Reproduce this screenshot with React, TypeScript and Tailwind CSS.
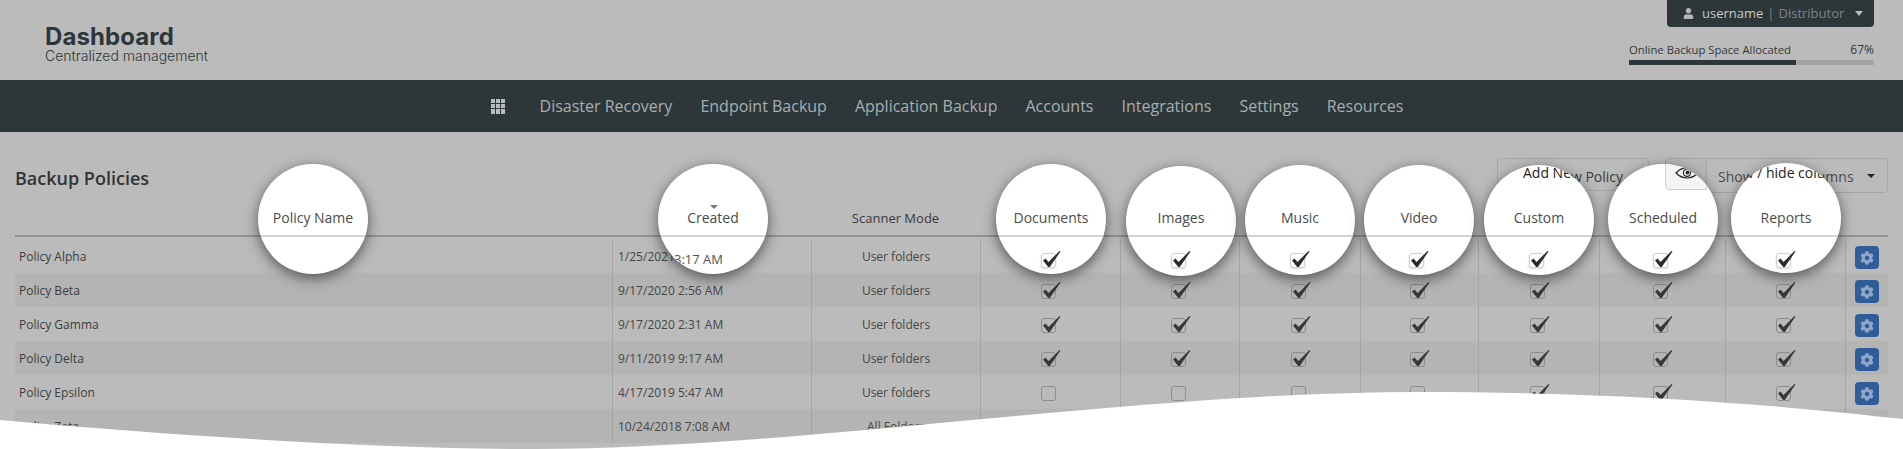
import type { ReactNode } from "react"
import { FaCog, FaUser } from "react-icons/fa"

const openSans = "font-['Open_Sans',sans-serif]"

const columns = "grid grid-cols-[597px_199px_169px_140px_119px_121px_118px_121px_126px_120px_43px]"

const navItems = [
  "Disaster Recovery",
  "Endpoint Backup",
  "Application Backup",
  "Accounts",
  "Integrations",
  "Settings",
  "Resources",
]

const policies = [
  { name: "Policy Alpha", created: "1/25/2021 3:17 AM", mode: "User folders", flags: [1, 1, 1, 1, 1, 1, 1] },
  { name: "Policy Beta", created: "9/17/2020 2:56 AM", mode: "User folders", flags: [1, 1, 1, 1, 1, 1, 1] },
  { name: "Policy Gamma", created: "9/17/2020 2:31 AM", mode: "User folders", flags: [1, 1, 1, 1, 1, 1, 1] },
  { name: "Policy Delta", created: "9/11/2019 9:17 AM", mode: "User folders", flags: [1, 1, 1, 1, 1, 1, 1] },
  { name: "Policy Epsilon", created: "4/17/2019 5:47 AM", mode: "User folders", flags: [0, 0, 0, 0, 1, 1, 1] },
  { name: "Policy Zeta", created: "10/24/2018 7:08 AM", mode: "All Folders", flags: [0, 0, 0, 0, 1, 1, 1] },
]

function Check({ on, light }: { on: boolean; light?: boolean }) {
  return (
    <div
      className={`relative h-[15px] w-[15px] rounded-[3px] border ${
        light ? "border-[#cfcfcf] bg-white shadow-[0_1px_2px_rgba(0,0,0,0.15)]" : "border-[#8d8d8d]"
      }`}
    >
      {on && (
        <svg width="22" height="20" viewBox="0 0 22 20" className="absolute -left-[2px] -top-[4px]">
          <path d="M3 10.5 L5.5 8.5 L8.5 12 L19.5 1 L20.5 1.5 L9.8 17 L8.2 17 Z" fill={light ? "#2a2a2a" : "#383838"} />
        </svg>
      )}
    </div>
  )
}

function EyeIcon() {
  return (
    <svg width="24" height="12" viewBox="0 0 24 12" fill="none" stroke="#222" strokeWidth="1.2">
      <path d="M1 6 C5 1.5 9 .8 12 .8 C15 .8 19 1.5 23 6 C19 10 15 11 12 11 C9 11 5 10 1 6 Z" />
      <circle cx="12" cy="5.8" r="3.6" />
      <circle cx="12.5" cy="5.5" r="1.3" fill="#222" />
    </svg>
  )
}

const spots: { label: string; cx: number; top: number; check: boolean; extra?: ReactNode }[] = [
  { label: "Policy Name", cx: 313, top: 164, check: false },
  {
    label: "Created",
    cx: 713,
    top: 164,
    check: false,
    extra: (
      <span className="absolute left-[609px] top-[250px] text-[13px] leading-[18px] text-[#555]">1/25/2021 3:17 AM</span>
    ),
  },
  { label: "Documents", cx: 1051, top: 164, check: true },
  { label: "Images", cx: 1181, top: 166, check: true },
  { label: "Music", cx: 1300, top: 165, check: true },
  { label: "Video", cx: 1419, top: 165, check: true },
  {
    label: "Custom",
    cx: 1539,
    top: 165,
    check: true,
    extra: <span className="absolute left-[1523px] top-[163px] text-[14px] leading-5 text-[#222]">Add New Policy</span>,
  },
  {
    label: "Scheduled",
    cx: 1663,
    top: 164,
    check: true,
    extra: (
      <>
        <span className="absolute left-[1523px] top-[163px] text-[14px] leading-5 text-[#222]">Add New Policy</span>
        <div className="absolute left-[1665px] top-[155px] h-[35px] w-[42px] rounded-l border border-[#cfcfcf] bg-[#f4f4f4]" />
        <div className="absolute left-[1675px] top-[167px]">
          <EyeIcon />
        </div>
      </>
    ),
  },
  {
    label: "Reports",
    cx: 1786,
    top: 163,
    check: true,
    extra: <span className="absolute left-[1718px] top-[163px] text-[14px] leading-5 text-[#222]">Show / hide columns</span>,
  },
]

function Spot({ label, cx, top, check, extra }: { label: string; cx: number; top: number; check: boolean; extra?: ReactNode }) {
  return (
    <div
      className="absolute h-[110px] w-[110px] overflow-hidden rounded-full bg-white shadow-[0_4px_14px_rgba(0,0,0,0.55)]"
      style={{ left: cx - 55, top }}
    >
      {/* pieces of the page that show through, placed in page coordinates */}
      {extra && (
        <div className="absolute h-[449px] w-[1903px]" style={{ left: 55 - cx, top: -top }}>
          {extra}
        </div>
      )}
      <div className="absolute left-0 flex w-full flex-col items-center" style={{ top: 209 - top }}>
        <span className="h-[18px] text-[14px] font-medium leading-[18px] text-[#4b4b4b]">{label}</span>
        <div className="mt-[8px] h-[2px] w-full shrink-0 bg-[#d4d4d4]" />
        {check && (
          <div className="mt-[16px] pr-[6px]">
            <Check on light />
          </div>
        )}
      </div>
      {label === "Created" && (
        <div className="absolute left-[52px] top-[41px] h-0 w-0 border-x-[4px] border-t-[4px] border-x-transparent border-t-[#777]" />
      )}
    </div>
  )
}

export default function App() {
  return (
    <div className={`relative h-[449px] w-[1903px] overflow-hidden bg-[#bbbbbb] ${openSans}`}>
      <header className="relative flex h-[80px] items-start justify-between pl-[45px] pr-[29px]">
        <div className="pt-[24px] font-['Inter',sans-serif] text-[#2d373a]">
          <div className="text-[24px] font-bold leading-[25px] tracking-[0.1px]">Dashboard</div>
          <div className="text-[14px] font-light leading-[14px]">Centralized management</div>
        </div>
        <div className="flex w-[245px] flex-col">
          <div className="ml-auto flex h-[27px] w-[207px] items-center rounded-b-[4px] bg-[#2d373a] pl-[16px] text-[13px]">
            <FaUser className="mr-[8px] h-[11px] w-[11px] text-[#b5b5b5]" />
            <span className="text-[#c6c6c6]">username</span>
            <span className="mx-[4px] text-[#7c8588]">|</span>
            <span className="text-[#7c8588]">Distributor</span>
            <div className="ml-[11px] h-0 w-0 border-x-[4px] border-t-[5px] border-x-transparent border-t-[#bdbdbd]" />
          </div>
          <div className="mt-[14px] flex justify-between text-[12px] leading-[18px] text-[#33383a]">
            <span className="text-[11.3px]">Online Backup Space Allocated</span>
            <span>67%</span>
          </div>
          <div className="mt-[1px] h-[5px] bg-[#a4a4a4]">
            <div className="h-full w-[167px] bg-[#2d373a]" />
          </div>
        </div>
      </header>

      <nav className="flex h-[52px] items-center justify-center gap-[28px] bg-[#2d373a] pr-[9px]">
        <div className="mr-[7px] grid h-[15px] w-[14px] grid-cols-3 gap-[1px]">
          {Array.from({ length: 9 }).map((_, i) => (
            <span key={i} className="bg-[#b9bcbc]" />
          ))}
        </div>
        {navItems.map((item) => (
          <a key={item} className="text-[16px] text-[#a7aeb0]">
            {item}
          </a>
        ))}
      </nav>

      <main className="px-[15px]">
        <div className="flex h-[77px] items-start justify-between pt-[26px]">
          <h1 className="pt-[5px] text-[18px] font-semibold leading-[30px] text-[#333]">Backup Policies</h1>
          <div className="flex gap-[16px]">
            <button className="h-[33px] w-[152px] rounded border border-[#a6a6a6] pt-[4px] text-[14px] text-[#3a3a3a]">
              Add New Policy
            </button>
            <div className="flex h-[35px] w-[223px] items-center rounded border border-[#a6a6a6] text-[14px] text-[#4a4a4a]">
              <div className="flex h-full w-[41px] items-center justify-center border-r border-[#a6a6a6] bg-[#b7b7b7]" />
              <span className="ml-[11px] pt-[2px]">Show / hide columns</span>
              <div className="ml-[13px] h-0 w-0 border-x-[4px] border-t-[4px] border-x-transparent border-t-[#222]" />
            </div>
          </div>
        </div>

        {/* the other headings sit in the spotlights below */}
        <div className={`${columns} box-content h-[18px] border-b-2 border-[#939393] pb-[8px]`}>
          <div className="col-start-3 text-center text-[13px] font-medium leading-[18px] text-[#3a3a3a]">Scanner Mode</div>
        </div>

        <div className="mt-[2px]">
          {policies.map((p, i) => (
            <div
              key={p.name}
              className={`${columns} h-[34px] text-[12px] text-[#464646] ${i % 2 ? "bg-[#b4b4b4]" : "bg-[#bbbbbb]"}`}
            >
              <div className="flex items-center pl-[4px] pt-[2px] font-medium text-[#3c3c3c]">{p.name}</div>
              <div className="flex items-center border-l border-[#a5a5a5] pl-[5px] pt-[2px]">{p.created}</div>
              <div className="flex items-center justify-center border-l border-[#a5a5a5] pt-[2px]">{p.mode}</div>
              {p.flags.map((on, j) => (
                <div key={j} className="flex items-center justify-center border-l border-[#a5a5a5] pr-[4px] pt-[3px]">
                  <Check on={!!on} />
                </div>
              ))}
              <div className="flex items-center justify-center border-l border-[#a5a5a5] pt-[3px]">
                <div className="flex h-[23px] w-[24px] shrink-0 items-center justify-center rounded-[4px] bg-[#2f5d9a]">
                  <FaCog className="h-[14px] w-[14px] text-[#90a6c6]" />
                </div>
              </div>
            </div>
          ))}
        </div>
      </main>

      {spots.map((s) => (
        <Spot key={s.label} {...s} />
      ))}

      <svg width="1903" height="449" viewBox="0 0 1903 449" className="pointer-events-none absolute left-0 top-0">
        <path d="M0 420 C180 436 380 449 534 449 C800 449 1130 392 1420 392 C1620 392 1780 405 1903 419 V449 H0 Z" fill="#ffffff" />
      </svg>
    </div>
  )
}
